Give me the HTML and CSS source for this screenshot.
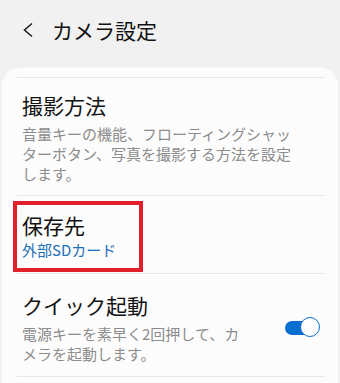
FILE: index.html
```html
<!DOCTYPE html>
<html lang="ja">
<head>
    <meta charset="UTF-8">
    <meta name="viewport" content="width=device-width, initial-scale=1.0">
    <title>カメラ設定</title>
    <link rel="stylesheet" href="styles.css">
</head>
<body>
    <header class="app-bar">
        <svg class="back" width="12" height="16" viewBox="0 0 12 16">
            <polyline points="10,1.5 2.5,8 10,14.5" fill="none" stroke="#222" stroke-width="1.6"/>
        </svg>
        <h1>カメラ設定</h1>
    </header>

    <div class="card">
        <div class="item first">
            <div class="text">
                <div class="title">撮影方法</div>
                <div class="summary">音量キーの機能、フローティングシャッターボタン、写真を撮影する方法を設定します。</div>
            </div>
        </div>

        <div class="item storage">
            <div class="text">
                <div class="title">保存先</div>
                <div class="value">外部SDカード</div>
            </div>
            <div class="highlight"></div>
        </div>

        <div class="item quick">
            <div class="text narrow">
                <div class="title">クイック起動</div>
                <div class="summary">電源キーを素早く2回押して、カメラを起動します。</div>
            </div>
            <div class="switch on"><span class="knob"></span></div>
        </div>
    </div>
</body>
</html>
```

FILE: styles.css
```css
body {
    font-family: "Noto Sans CJK JP", "Noto Sans", sans-serif;
    background-color: #f1f1f1;
    color: #111;
    margin: 0;
    padding: 0;
}

.app-bar {
    display: flex;
    align-items: center;
    height: 60px;
    padding: 0 0 7px 22px;
}

.back {
    display: block;
    margin-top: -1px;
}

.app-bar h1 {
    font-size: 21px;
    font-weight: 400;
    margin: 0 0 0 18px;
    line-height: 28px;
}

.card {
    background-color: #fcfcfc;
    border-radius: 18px 18px 0 0;
    margin: 0 2px;
    padding: 9px 13px 0 15px;
    min-height: 320px;
    border-top: 1px solid #f6f6f6;
}

.item {
    position: relative;
    display: flex;
    align-items: center;
    border-bottom: 1px solid #e6e6e6;
    padding: 13px 25px 11px 5px;
}

.item.first {
    border-top: 1px solid #e6e6e6;
}

.text {
    flex: 1;
    min-width: 0;
}

.text.narrow {
    flex: none;
    width: 226px;
}

.title {
    font-size: 21px;
    line-height: 28px;
}

.summary {
    font-size: 15px;
    line-height: 20px;
    color: #8c8c8c;
    margin-top: 5px;
}

.value {
    font-size: 15px;
    line-height: 20px;
    color: #1c6fb8;
    margin-top: 1px;
}

.item.storage {
    padding-top: 15px;
    padding-bottom: 13px;
}

.highlight {
    position: absolute;
    left: -4px;
    top: 5px;
    width: 122px;
    height: 63px;
    border: 4px solid #e2202b;
}

.item.quick {
    padding-top: 17px;
    padding-bottom: 12px;
    padding-right: 5px;
}

.switch {
    position: relative;
    width: 35px;
    height: 21px;
    margin-left: auto;
}

.switch.on::before {
    content: "";
    position: absolute;
    left: 0;
    top: 4px;
    width: 30px;
    height: 14px;
    border-radius: 7px;
    background-color: #0a6ed1;
}

.knob {
    position: absolute;
    right: 0;
    top: 0;
    width: 18px;
    height: 18px;
    border-radius: 50%;
    background-color: #fff;
    border: 1.5px solid #0a6ed1;
}
```
